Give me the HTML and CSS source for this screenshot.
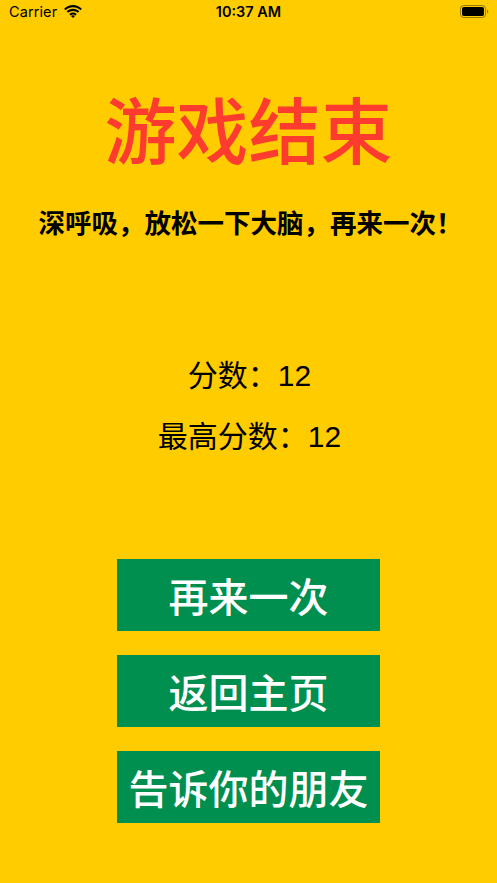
FILE: index.html
```html
<!DOCTYPE html>
<html lang="zh">
<head>
<meta charset="utf-8">
<title>游戏结束</title>
<link rel="stylesheet" href="styles.css">
</head>
<body>
<div class="screen">
  <div class="statusbar">
    <div class="sb-left">
      <span class="carrier">Carrier</span>
      <svg class="wifi" width="18" height="13" viewBox="0 0 18 13">
        <path d="M9 2.2c2.9 0 5.5 1.1 7.5 3l1.4-1.5C15.5 1.4 12.4 0 9 0S2.5 1.4.1 3.7L1.5 5.2c2-1.9 4.6-3 7.5-3z" fill="#000"/>
        <path d="M9 5.9c1.9 0 3.6.7 4.9 1.9l1.4-1.5C13.6 4.7 11.4 3.8 9 3.8S4.4 4.7 2.7 6.3l1.4 1.5C5.4 6.6 7.1 5.9 9 5.9z" fill="#000"/>
        <path d="M9 9.5c.9 0 1.7.3 2.3.9l1.5-1.5C11.8 8 10.5 7.4 9 7.4S6.2 8 5.2 8.9l1.5 1.5c.6-.6 1.4-.9 2.3-.9z" fill="#000"/>
        <path d="M9 13l2-2c-.5-.5-1.2-.8-2-.8s-1.5.3-2 .8z" fill="#000"/>
      </svg>
    </div>
    <div class="sb-time">10:37 AM</div>
    <div class="sb-right">
      <svg class="battery" width="29" height="13" viewBox="0 0 29 13">
        <rect x="0.5" y="0.5" width="25" height="12" rx="3.2" fill="none" stroke="#000" stroke-opacity="0.4"/>
        <rect x="2" y="2" width="22" height="9" rx="1.8" fill="#000"/>
        <path d="M27 4.5v4c.8-.3 1.3-1.1 1.3-2s-.5-1.7-1.3-2z" fill="#000" fill-opacity="0.4"/>
      </svg>
    </div>
  </div>

  <h1 class="title">游戏结束</h1>
  <p class="subtitle">深呼吸，放松一下大脑，再来一次！</p>

  <div class="scores">
    <div class="score">分数：12</div>
    <div class="score">最高分数：12</div>
  </div>

  <div class="buttons">
    <button class="btn">再来一次</button>
    <button class="btn">返回主页</button>
    <button class="btn">告诉你的朋友</button>
  </div>
</div>
</body>
</html>
```
FILE: styles.css
```css
* { box-sizing: border-box; }
html, body {
  margin: 0;
  padding: 0;
  background: #ffcc00;
}
body {
  font-family: "Noto Sans CJK SC", "Noto Sans", sans-serif;
}
.screen {
  width: 497px;
  height: 883px;
  background: #ffcc00;
  display: flex;
  flex-direction: column;
  align-items: center;
  overflow: hidden;
}
.statusbar {
  width: 100%;
  height: 24px;
  display: flex;
  align-items: center;
  justify-content: space-between;
  padding: 0 8px 0 9px;
  position: relative;
  font-family: "Inter", "Liberation Sans", sans-serif;
  font-size: 14.5px;
  color: #000;
}
.sb-left {
  display: flex;
  align-items: center;
  gap: 7px;
  padding-bottom: 1px;
}
.carrier { font-weight: 400; letter-spacing: 0.1px; }
.wifi { display: block; margin-top: -1px; }
.sb-time {
  position: absolute;
  left: 0;
  right: 0;
  text-align: center;
  font-weight: 600;
  padding-bottom: 1px;
  pointer-events: none;
}
.sb-right { display: flex; align-items: center; }
.battery { display: block; margin-top: -1px; }

.title {
  margin: 63px 0 0;
  font-size: 72px;
  line-height: 80px;
  font-weight: 500;
  color: #fd3b2f;
  letter-spacing: 0;
}
.subtitle {
  margin: 37px 0 0;
  font-size: 26.5px;
  line-height: 36px;
  font-weight: 700;
  color: #000;
  padding-left: 4px;
}
.scores {
  margin-top: 115px;
  display: flex;
  flex-direction: column;
  align-items: center;
  gap: 19px;
}
.score {
  font-family: "Liberation Sans", "Noto Sans CJK SC", sans-serif;
  font-size: 30px;
  line-height: 42px;
  color: #000;
  font-weight: 400;
  padding-left: 2px;
}
.buttons {
  margin-top: 101px;
  display: flex;
  flex-direction: column;
  gap: 24px;
}
.btn {
  width: 263px;
  height: 72px;
  border: none;
  margin: 0;
  padding: 0;
  background: #008f4f;
  color: #fff;
  font-family: "Noto Sans CJK SC", "Noto Sans", sans-serif;
  font-size: 40px;
  font-weight: 500;
  line-height: 72px;
  text-align: center;
}
```
